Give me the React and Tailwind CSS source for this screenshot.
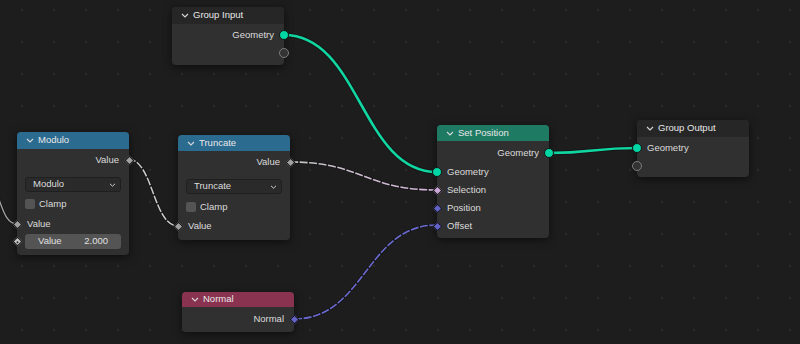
import React from "react";

const font = { fontFamily: '"Liberation Sans", Arial, sans-serif' };

function Chevron() {
  return (
    <svg width="8" height="5" viewBox="0 0 8 5" className="shrink-0">
      <path d="M1 1 L4 4 L7 1" fill="none" stroke="#d8d8d8" strokeWidth="1.1" />
    </svg>
  );
}

function Socket({ kind, side }) {
  const pos = side === "left" ? "-left-[5px]" : "-right-[5px]";
  if (kind === "geo")
    return <span className={`absolute ${pos} top-1/2 -translate-y-1/2 w-[10px] h-[10px] rounded-full bg-[#00d6a3] border border-[#141414]`} />;
  if (kind === "empty")
    return <span className={`absolute ${pos} top-1/2 -translate-y-1/2 w-[10px] h-[10px] rounded-full bg-[#333333] border-[1.5px] border-[#7c7c7c]`} />;
  const color =
    kind === "float" ? "bg-[#a1a1a1]" : kind === "sel" ? "bg-[#cca6d6]" : kind === "vec" ? "bg-[#6363c7]" : "bg-[#c8c8c8]";
  return (
    <span className={`absolute ${pos} top-1/2 -translate-y-1/2 w-[10px] h-[10px] flex items-center justify-center`}>
      <span className={`w-[7px] h-[7px] rotate-45 ${color} border border-[#141414] flex items-center justify-center`}>
        {kind === "single" && <span className="w-[2px] h-[2px] rounded-full bg-[#2a2a2a]" />}
      </span>
    </span>
  );
}

function OutRow({ label, kind, className = "" }) {
  return (
    <div className={`relative h-[18px] flex items-center justify-end pr-[10px] ${className}`}>
      <span>{label}</span>
      <Socket kind={kind} side="right" />
    </div>
  );
}

function InRow({ label, kind, className = "" }) {
  return (
    <div className={`relative h-[18px] flex items-center pl-[10px] ${className}`}>
      <span>{label}</span>
      <Socket kind={kind} side="left" />
    </div>
  );
}

function Header({ title, className }) {
  return (
    <div className={`flex items-center gap-[4px] pl-[9px] rounded-t-[4px] text-[#e8e8e8] ${className}`}>
      <Chevron />
      <span>{title}</span>
    </div>
  );
}

function Dropdown({ label, className = "" }) {
  return (
    <div className={`mx-[8px] h-[15px] rounded-[3px] bg-[#2a2a2a] border border-[#1f1f1f] flex items-center justify-between pl-[7px] pr-[4px] ${className}`}>
      <span>{label}</span>
      <svg width="7" height="4" viewBox="0 0 7 4">
        <path d="M1 0.8 L3.5 3.2 L6 0.8" fill="none" stroke="#cfcfcf" strokeWidth="1" />
      </svg>
    </div>
  );
}

function Clamp({ className = "" }) {
  return (
    <div className={`h-[18px] flex items-center gap-[4px] pl-[8px] ${className}`}>
      <span className="w-[10px] h-[10px] rounded-[2px] bg-[#545454]" />
      <span>Clamp</span>
    </div>
  );
}

const nodeBase =
  "absolute w-[112px] rounded-[4px] bg-[#303030] text-[9.5px] text-[#dcdcdc] shadow-[0_2px_8px_rgba(0,0,0,0.55)] z-10";

export default function App() {
  return (
    <div
      className="relative w-[800px] h-[344px] overflow-hidden bg-[#1d1d1d] bg-[radial-gradient(circle,#2b2b2b_1px,transparent_1.3px)] bg-[length:32px_32px] bg-[position:6px_-6px]"
      style={font}
    >
      {/* links */}
      <svg className="absolute inset-0 w-full h-full pointer-events-none z-0" viewBox="0 0 800 344">
        <defs>
          <linearGradient id="selGrad" gradientUnits="userSpaceOnUse" x1="290" y1="0" x2="437" y2="0">
            <stop offset="0" stopColor="#c4c4c4" />
            <stop offset="1" stopColor="#d3b3da" />
          </linearGradient>
        </defs>
        <g fill="none" strokeLinecap="round">
          <path d="M-8 185 C2 200, 3 224, 17 224" stroke="#111" strokeWidth="3" opacity="0.6" />
          <path d="M-8 185 C2 200, 3 224, 17 224" stroke="#a0a0a0" strokeWidth="1.4" />

          <path d="M284 35 C360 35, 361 172, 437 172" stroke="#0f0f0f" strokeWidth="4.5" opacity="0.5" />
          <path d="M284 35 C360 35, 361 172, 437 172" stroke="#10d6a2" strokeWidth="2.6" />

          <path d="M549 153 C593 153, 593 148, 637 148" stroke="#0f0f0f" strokeWidth="4.5" opacity="0.5" />
          <path d="M549 153 C593 153, 593 148, 637 148" stroke="#10d6a2" strokeWidth="2.6" />

          <path d="M128 159 C153 159, 153 226, 178 226" stroke="#111" strokeWidth="3.2" opacity="0.6" />
          <path d="M128 159 C153 159, 153 226, 178 226" stroke="#cdcdcd" strokeWidth="1.5" strokeDasharray="8 1.5" strokeLinecap="butt" />

          <path d="M290 162 C363 162, 364 190, 437 190" stroke="#111" strokeWidth="3.2" opacity="0.6" />
          <path d="M290 162 C363 162, 364 190, 437 190" stroke="url(#selGrad)" strokeWidth="1.6" strokeDasharray="8 1.5" strokeLinecap="butt" />

          <path d="M294 319 C365 319, 366 225, 437 225" stroke="#111" strokeWidth="3.2" opacity="0.6" />
          <path d="M294 319 C365 319, 366 225, 437 225" stroke="#6a6ad0" strokeWidth="1.6" strokeDasharray="8 1.5" strokeLinecap="butt" />
        </g>
      </svg>

      {/* Group Input */}
      <div className={`${nodeBase} left-[172px] top-[7px] pb-[3px]`}>
        <Header title="Group Input" className="h-[17px] bg-[#262626]" />
        <OutRow label="Geometry" kind="geo" className="mt-[2px]" />
        <OutRow label="" kind="empty" />
      </div>

      {/* Modulo */}
      <div className={`${nodeBase} left-[17px] top-[132px] pb-[6px]`}>
        <Header title="Modulo" className="h-[17px] bg-[#2b6b90]" />
        <OutRow label="Value" kind="float" className="mt-[2px]" />
        <Dropdown label="Modulo" className="mt-[8px]" />
        <Clamp className="mt-[3px]" />
        <InRow label="Value" kind="float" className="mt-[2px]" />
        <div className="relative mt-[1px] h-[15px]">
          <div className="mx-[8px] h-[15px] rounded-[3px] bg-[#545454] flex items-center justify-between px-[13px] text-[#e0e0e0]">
            <span>Value</span>
            <span>2.000</span>
          </div>
          <Socket kind="single" side="left" />
        </div>
      </div>

      {/* Truncate */}
      <div className={`${nodeBase} left-[178px] top-[135px] pb-[5px]`}>
        <Header title="Truncate" className="h-[16px] bg-[#2b6b90]" />
        <OutRow label="Value" kind="float" className="mt-[2px]" />
        <Dropdown label="Truncate" className="mt-[8px]" />
        <Clamp className="mt-[4px]" />
        <InRow label="Value" kind="float" className="mt-[1px]" />
      </div>

      {/* Set Position */}
      <div className={`${nodeBase} left-[437px] top-[125px] pb-[3px]`}>
        <Header title="Set Position" className="h-[16px] bg-[#1f7a64]" />
        <OutRow label="Geometry" kind="geo" className="mt-[3px]" />
        <InRow label="Geometry" kind="geo" className="mt-[1px]" />
        <InRow label="Selection" kind="sel" />
        <InRow label="Position" kind="vec" />
        <InRow label="Offset" kind="vec" />
      </div>

      {/* Group Output */}
      <div className={`${nodeBase} left-[637px] top-[120px] pb-[2px]`}>
        <Header title="Group Output" className="h-[17px] bg-[#262626]" />
        <InRow label="Geometry" kind="geo" className="mt-[2px]" />
        <InRow label="" kind="empty" />
      </div>

      {/* Normal */}
      <div className={`${nodeBase} left-[182px] top-[292px] pb-[4px]`}>
        <Header title="Normal" className="h-[15px] bg-[#8a3350]" />
        <OutRow label="Normal" kind="vec" className="mt-[3px]" />
      </div>
    </div>
  );
}
